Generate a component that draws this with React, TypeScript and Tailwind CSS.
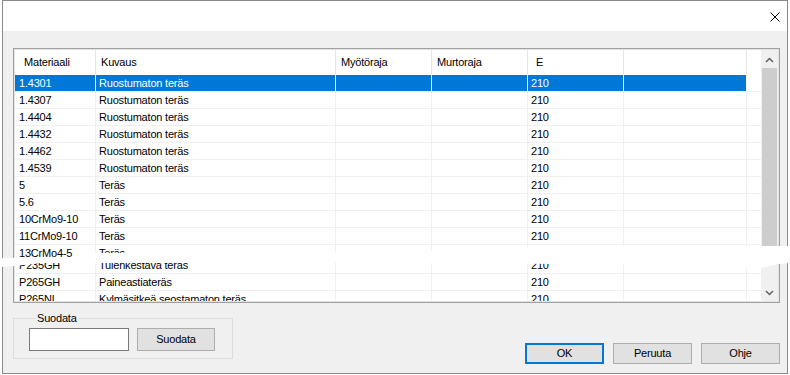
import React from "react";

const rows: [string, string][] = [
  ["1.4301", "Ruostumaton teräs"],
  ["1.4307", "Ruostumaton teräs"],
  ["1.4404", "Ruostumaton teräs"],
  ["1.4432", "Ruostumaton teräs"],
  ["1.4462", "Ruostumaton teräs"],
  ["1.4539", "Ruostumaton teräs"],
  ["5", "Teräs"],
  ["5.6", "Teräs"],
  ["10CrMo9-10", "Teräs"],
  ["11CrMo9-10", "Teräs"],
  ["13CrMo4-5", "Teräs"],
  ["P235GH", "Tulenkestävä teräs"],
  ["P265GH", "Paineastiateräs"],
  ["P265NL", "Kylmäsitkeä seostamaton teräs"],
];

function Row({ m, k, sel, shift }: { m: string; k: string; sel: boolean; shift: boolean }) {
  const cell = sel
    ? "h-full flex items-center border-r border-white bg-[#0078d7] text-white"
    : "h-full flex items-center border-r border-[#f0f0f0] text-black";
  return (
    <div className={`flex h-[17px] shrink-0 border-b border-[#f0f0f0] bg-white ${shift ? "-mt-[5px]" : ""}`}>
      <div className={`${cell} w-[81px] pl-[4px]`}>{m}</div>
      <div className={`${cell} w-[240px] pl-[3px] whitespace-nowrap`}>{k}</div>
      <div className={`${cell} w-[96px]`}></div>
      <div className={`${cell} w-[96px]`}></div>
      <div className={`${cell} w-[96px] pl-[3px]`}>210</div>
      <div className={`${cell} w-[123px]`}></div>
      <div className="w-[14px] h-full"></div>
    </div>
  );
}

export default function App() {
  const hcell = "h-full flex items-center border-r border-[#e5e5e5]";
  return (
    <div
      className="relative w-[790px] h-[375px] bg-white overflow-hidden text-[11px] tracking-[-0.2px] text-black"
      style={{ fontFamily: '"Liberation Sans", Arial, sans-serif' }}
    >
      <div className="ml-[2px] w-[786px] h-[374px] border border-[#8a8a8a] flex flex-col">
        {/* title bar */}
        <div className="h-[30px] bg-white flex items-center justify-end pr-[7px]">
          <svg width="10" height="10" viewBox="0 0 10 10" className="mt-[1px]">
            <path d="M0.5 0.5 L9.5 9.5 M9.5 0.5 L0.5 9.5" stroke="#000" strokeWidth="1" fill="none" />
          </svg>
        </div>
        {/* body */}
        <div className="flex-1 bg-[#f0f0f0] pt-[17px] pl-[10px] pr-[7px] flex flex-col">
          {/* grid */}
          <div className="h-[255px] border border-[#a0a0a0] flex">
            <div className="flex-1 border border-[#e3e3e3] flex bg-white">
              <div className="w-[746px] flex flex-col overflow-hidden">
                <div className="flex h-[25px] shrink-0 bg-white">
                  <div className={`${hcell} w-[81px] pl-[9px]`}>Materiaali</div>
                  <div className={`${hcell} w-[240px] pl-[5px]`}>Kuvaus</div>
                  <div className={`${hcell} w-[96px] pl-[5px]`}>Myötöraja</div>
                  <div className={`${hcell} w-[96px] pl-[5px]`}>Murtoraja</div>
                  <div className={`${hcell} w-[96px] pl-[8px]`}>E</div>
                  <div className={`${hcell} w-[123px]`}></div>
                  <div className="w-[14px]"></div>
                </div>
                {rows.map(([m, k], i) => (
                  <Row key={m} m={m} k={k} sel={i === 0} shift={i === 11} />
                ))}
              </div>
              {/* scrollbar */}
              <div className="w-[17px] flex flex-col bg-[#f0f0f0]">
                <div className="h-[18px] shrink-0 flex items-center justify-center pt-[2px]">
                  <svg width="9" height="6" viewBox="0 0 9 6">
                    <path d="M1 5 L4.5 1.5 L8 5" stroke="#606060" strokeWidth="1.5" fill="none" />
                  </svg>
                </div>
                <div className="h-[182px] shrink-0 mx-[1px] bg-[#cdcdcd]"></div>
                <div className="flex-1"></div>
                <div className="h-[17px] shrink-0 flex items-center justify-center">
                  <svg width="9" height="6" viewBox="0 0 9 6">
                    <path d="M1 1 L4.5 4.5 L8 1" stroke="#606060" strokeWidth="1.5" fill="none" />
                  </svg>
                </div>
              </div>
            </div>
          </div>
          {/* bottom area */}
          <div className="h-[70px] flex justify-between">
            <fieldset className="mt-[9px] self-start w-[220px] border border-[#dcdcdc] pl-[15px] pr-[10px] pt-[3px] pb-[7px]">
              <legend className="ml-[7px] px-[1px] leading-[13px]">Suodata</legend>
              <div className="flex gap-[8px]">
                <div className="w-[100px] h-[23px] border border-[#7a7a7a] bg-white"></div>
                <button className="w-[78px] h-[23px] border border-[#adadad] bg-[#e1e1e1] flex items-center justify-center">
                  Suodata
                </button>
              </div>
            </fieldset>
            <div className="self-end mb-[9px] flex gap-[9px]">
              <button className="w-[79px] h-[21px] border-2 border-[#0078d7] bg-[#e1e1e1] flex items-center justify-center">
                OK
              </button>
              <button className="w-[79px] h-[21px] border border-[#adadad] bg-[#e1e1e1] flex items-center justify-center">
                Peruuta
              </button>
              <button className="w-[79px] h-[21px] border border-[#adadad] bg-[#e1e1e1] flex items-center justify-center">
                Ohje
              </button>
            </div>
          </div>
        </div>
      </div>
      {/* torn strip across the screenshot */}
      <svg className="absolute left-0 top-0 pointer-events-none" width="790" height="375" viewBox="0 0 790 375">
        <polygon
          fill="#ffffff"
          points="0,258 14,258 16,257 70,257 92,253 300,252 440,251 480,248 560,247 760,246 790,246 790,263 778,264 762,268 740,266 560,264 440,263 300,262 200,263 40,263 16,266 0,267"
        />
      </svg>
    </div>
  );
}
